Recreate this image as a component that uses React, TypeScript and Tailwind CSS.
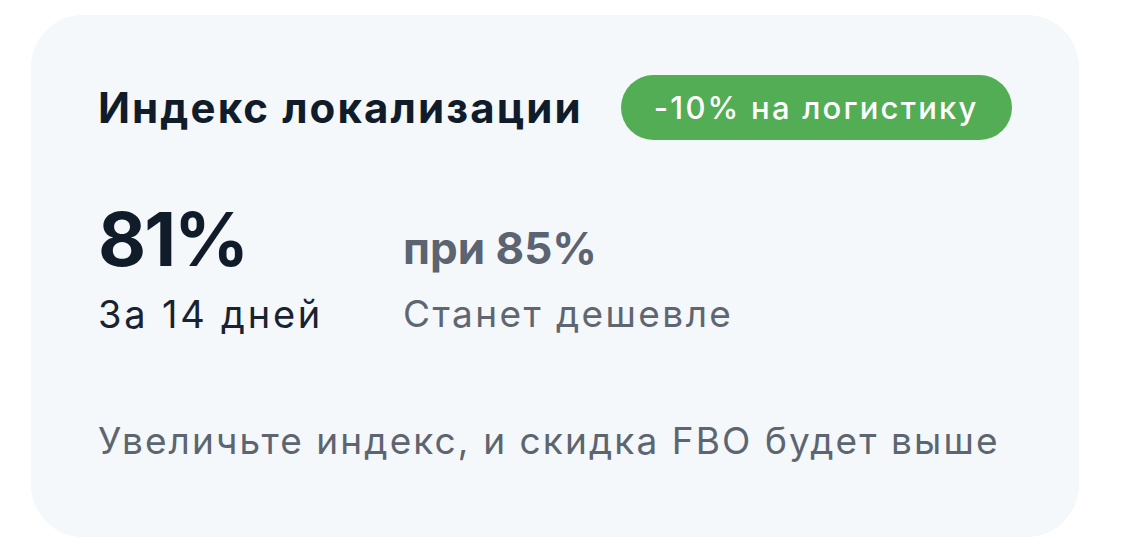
export default function App() {
  return (
    <div className="min-h-screen bg-white pt-[15px] pl-[31px] font-['Inter','Noto_Sans',sans-serif]">
      <div className="flex h-[522px] w-[1048px] flex-col rounded-[52px] bg-[#f4f8fb] pl-[67px] pt-[60px]">
        {/* Header */}
        <div className="flex h-[65px] items-center gap-[38px]">
          <h1 className="text-[42px] leading-none font-bold tracking-[2.1px] text-[#111c2b]">
            Индекс локализации
          </h1>
          <span className="flex h-[65px] items-center rounded-full bg-[#53ad54] px-[33px] text-[31px] leading-none font-medium tracking-[2.2px] text-white">
            -10% на логистику
          </span>
        </div>

        {/* Metrics */}
        <div className="mt-[62px] flex">
          <div className="w-[305px]">
            <div className="text-[74px] leading-none font-bold tracking-[-2px] text-[#111c2b]">81%</div>
            <div className="mt-[19px] text-[38px] leading-none tracking-[2.8px] text-[#1a2230]">За 14 дней</div>
          </div>
          <div className="flex flex-col">
            <div className="flex h-[74px] items-end pb-[6px] text-[44px] leading-none font-bold text-[#5b6470]">
              при 85%
            </div>
            <div className="mt-[19px] text-[37px] leading-none tracking-[2.4px] text-[#5f6670]">Станет дешевле</div>
          </div>
        </div>

        <p className="mt-[89px] text-[37px] leading-none tracking-[2.1px] text-[#5d6570]">
          Увеличьте индекс, и скидка FBO будет выше
        </p>
      </div>
    </div>
  );
}
